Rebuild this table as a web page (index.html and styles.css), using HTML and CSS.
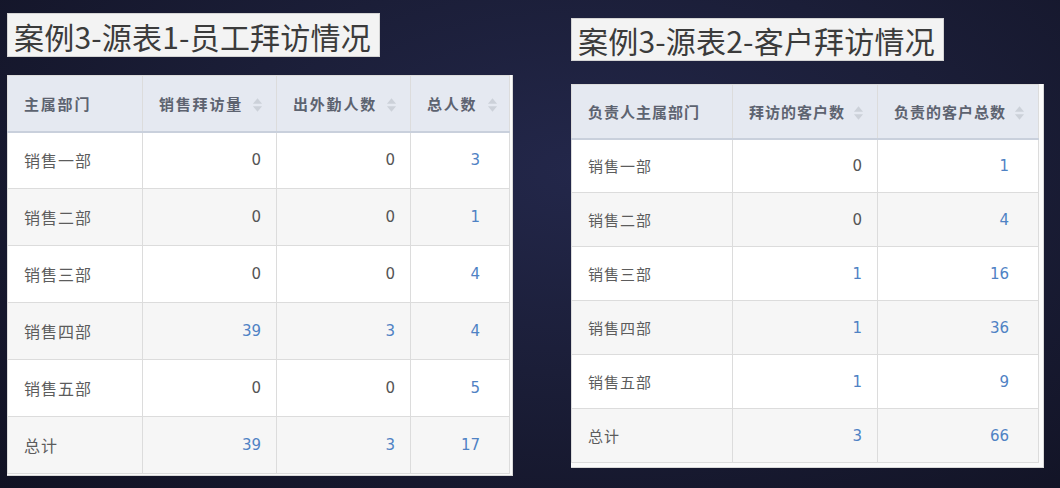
FILE: index.html
```html
<!DOCTYPE html>
<html lang="zh-CN">
<head>
    <meta charset="UTF-8">
    <meta name="viewport" content="width=device-width, initial-scale=1.0">
    <title>案例3 源表</title>
    <link rel="stylesheet" href="styles.css">
</head>
<body>
    <div class="slide">
        <section class="panel staff">
            <h2 class="title">案例3-源表1-员工拜访情况</h2>
            <div class="frame">
                <table class="grid">
                    <colgroup>
                        <col class="w-dept">
                        <col class="w-num">
                        <col class="w-num">
                        <col class="w-last">
                    </colgroup>
                    <thead>
                        <tr>
                            <th>主属部门</th>
                            <th class="sortable">销售拜访量 <svg class="sort" viewBox="0 0 9 14"><path d="M4.5 1 8.5 6 0.5 6Z M0.5 8 8.5 8 4.5 13Z"/></svg></th>
                            <th class="sortable">出外勤人数 <svg class="sort" viewBox="0 0 9 14"><path d="M4.5 1 8.5 6 0.5 6Z M0.5 8 8.5 8 4.5 13Z"/></svg></th>
                            <th class="sortable">总人数 <svg class="sort" viewBox="0 0 9 14"><path d="M4.5 1 8.5 6 0.5 6Z M0.5 8 8.5 8 4.5 13Z"/></svg></th>
                        </tr>
                    </thead>
                    <tbody>
                        <tr><td>销售一部</td><td class="num">0</td><td class="num">0</td><td class="num link">3</td></tr>
                        <tr><td>销售二部</td><td class="num">0</td><td class="num">0</td><td class="num link">1</td></tr>
                        <tr><td>销售三部</td><td class="num">0</td><td class="num">0</td><td class="num link">4</td></tr>
                        <tr><td>销售四部</td><td class="num link">39</td><td class="num link">3</td><td class="num link">4</td></tr>
                        <tr><td>销售五部</td><td class="num">0</td><td class="num">0</td><td class="num link">5</td></tr>
                        <tr><td>总计</td><td class="num link">39</td><td class="num link">3</td><td class="num link">17</td></tr>
                    </tbody>
                </table>
            </div>
        </section>

        <section class="panel client">
            <h2 class="title">案例3-源表2-客户拜访情况</h2>
            <div class="frame">
                <table class="grid">
                    <colgroup>
                        <col class="w-dept">
                        <col class="w-num">
                        <col class="w-last">
                    </colgroup>
                    <thead>
                        <tr>
                            <th>负责人主属部门</th>
                            <th class="sortable">拜访的客户数 <svg class="sort" viewBox="0 0 9 14"><path d="M4.5 1 8.5 6 0.5 6Z M0.5 8 8.5 8 4.5 13Z"/></svg></th>
                            <th class="sortable">负责的客户总数 <svg class="sort" viewBox="0 0 9 14"><path d="M4.5 1 8.5 6 0.5 6Z M0.5 8 8.5 8 4.5 13Z"/></svg></th>
                        </tr>
                    </thead>
                    <tbody>
                        <tr><td>销售一部</td><td class="num">0</td><td class="num link">1</td></tr>
                        <tr><td>销售二部</td><td class="num">0</td><td class="num link">4</td></tr>
                        <tr><td>销售三部</td><td class="num link">1</td><td class="num link">16</td></tr>
                        <tr><td>销售四部</td><td class="num link">1</td><td class="num link">36</td></tr>
                        <tr><td>销售五部</td><td class="num link">1</td><td class="num link">9</td></tr>
                        <tr><td>总计</td><td class="num link">3</td><td class="num link">66</td></tr>
                    </tbody>
                </table>
            </div>
        </section>
    </div>
</body>
</html>
```

FILE: styles.css
```css
html, body {
    margin: 0;
    height: 100%;
}
body {
    font-family: "Noto Sans CJK SC", "Noto Sans", sans-serif;
    background: radial-gradient(ellipse at 55% 35%, #23274a 0%, #1b1e38 45%, #111223 100%);
    overflow: hidden;
}
.slide {
    display: flex;
    gap: 58px;
    padding-left: 7px;
    height: 488px;
    box-sizing: border-box;
}
.panel {
    display: flex;
    flex-direction: column;
    align-items: flex-start;
}
.staff {
    padding-top: 13px;
}
.client {
    padding-top: 18px;
}
.title {
    margin: 0;
    padding: 0 8px 0 6px;
    height: 44px;
    line-height: 44px;
    font-size: 30px;
    font-weight: 400;
    letter-spacing: 0.2px;
    color: #3b3b3b;
    background: #f3f3f3;
    border: 1px solid #d4d4d4;
    box-sizing: border-box;
    white-space: nowrap;
}
.staff .title {
    margin-bottom: 18px;
}
.client .title {
    height: 43px;
    line-height: 43px;
    margin-bottom: 23px;
}
.frame {
    background: #fbfbfb;
    border-right: 1px solid #d9d9d9;
    border-bottom: 1px solid #d9d9d9;
}
.staff .frame {
    padding: 0 2px 1px 0;
}
.client .frame {
    padding: 0 4px 4px 0;
}
.grid {
    border-collapse: collapse;
    table-layout: fixed;
    border: 1px solid #d6d9de;
}
.grid th, .grid td {
    border: 1px solid #dcdcdc;
    padding: 0 0 0 16px;
    text-align: left;
    vertical-align: middle;
    white-space: nowrap;
}
.grid th {
    background: #e5e9f1;
    color: #5d6370;
    font-weight: 700;
    border-bottom: 2px solid #c9d0dc;
}
.grid td {
    color: #5c5c5c;
    letter-spacing: 1px;
}
.grid tbody tr:nth-child(odd) td {
    background: #ffffff;
}
.grid tbody tr:nth-child(even) td {
    background: #f6f6f6;
}
.grid td.num {
    font-family: "DejaVu Sans", "Liberation Sans", sans-serif;
    text-align: right;
    padding: 0 15px 0 0;
    letter-spacing: 0;
    color: #555555;
}
.grid td.num:last-child {
    padding-right: 29px;
}
.grid td.link {
    color: #4f82c4;
}
.sort {
    width: 11px;
    height: 16px;
    margin-left: 4px;
    vertical-align: -3px;
    fill: #ccd1d9;
}

/* 员工拜访 */
.staff .grid {
    width: 503px;
}
.staff .w-dept { width: 135px; }
.staff .w-num { width: 134px; }
.staff .w-last { width: 99px; }
.staff thead tr { height: 56px; }
.staff tbody tr { height: 57px; }
.staff th { font-size: 15px; letter-spacing: 1.8px; }
.staff td { font-size: 16px; }
.staff td.num { font-size: 15px; }

/* 客户拜访 */
.client .grid {
    width: 467px;
}
.client .w-dept { width: 161px; }
.client .w-num { width: 145px; }
.client .w-last { width: 161px; }
.client thead tr { height: 54px; }
.client tbody tr { height: 54px; }
.client th { font-size: 15px; letter-spacing: 1px; }
.client td { font-size: 15px; }
.client td.num { font-size: 15px; }
```
